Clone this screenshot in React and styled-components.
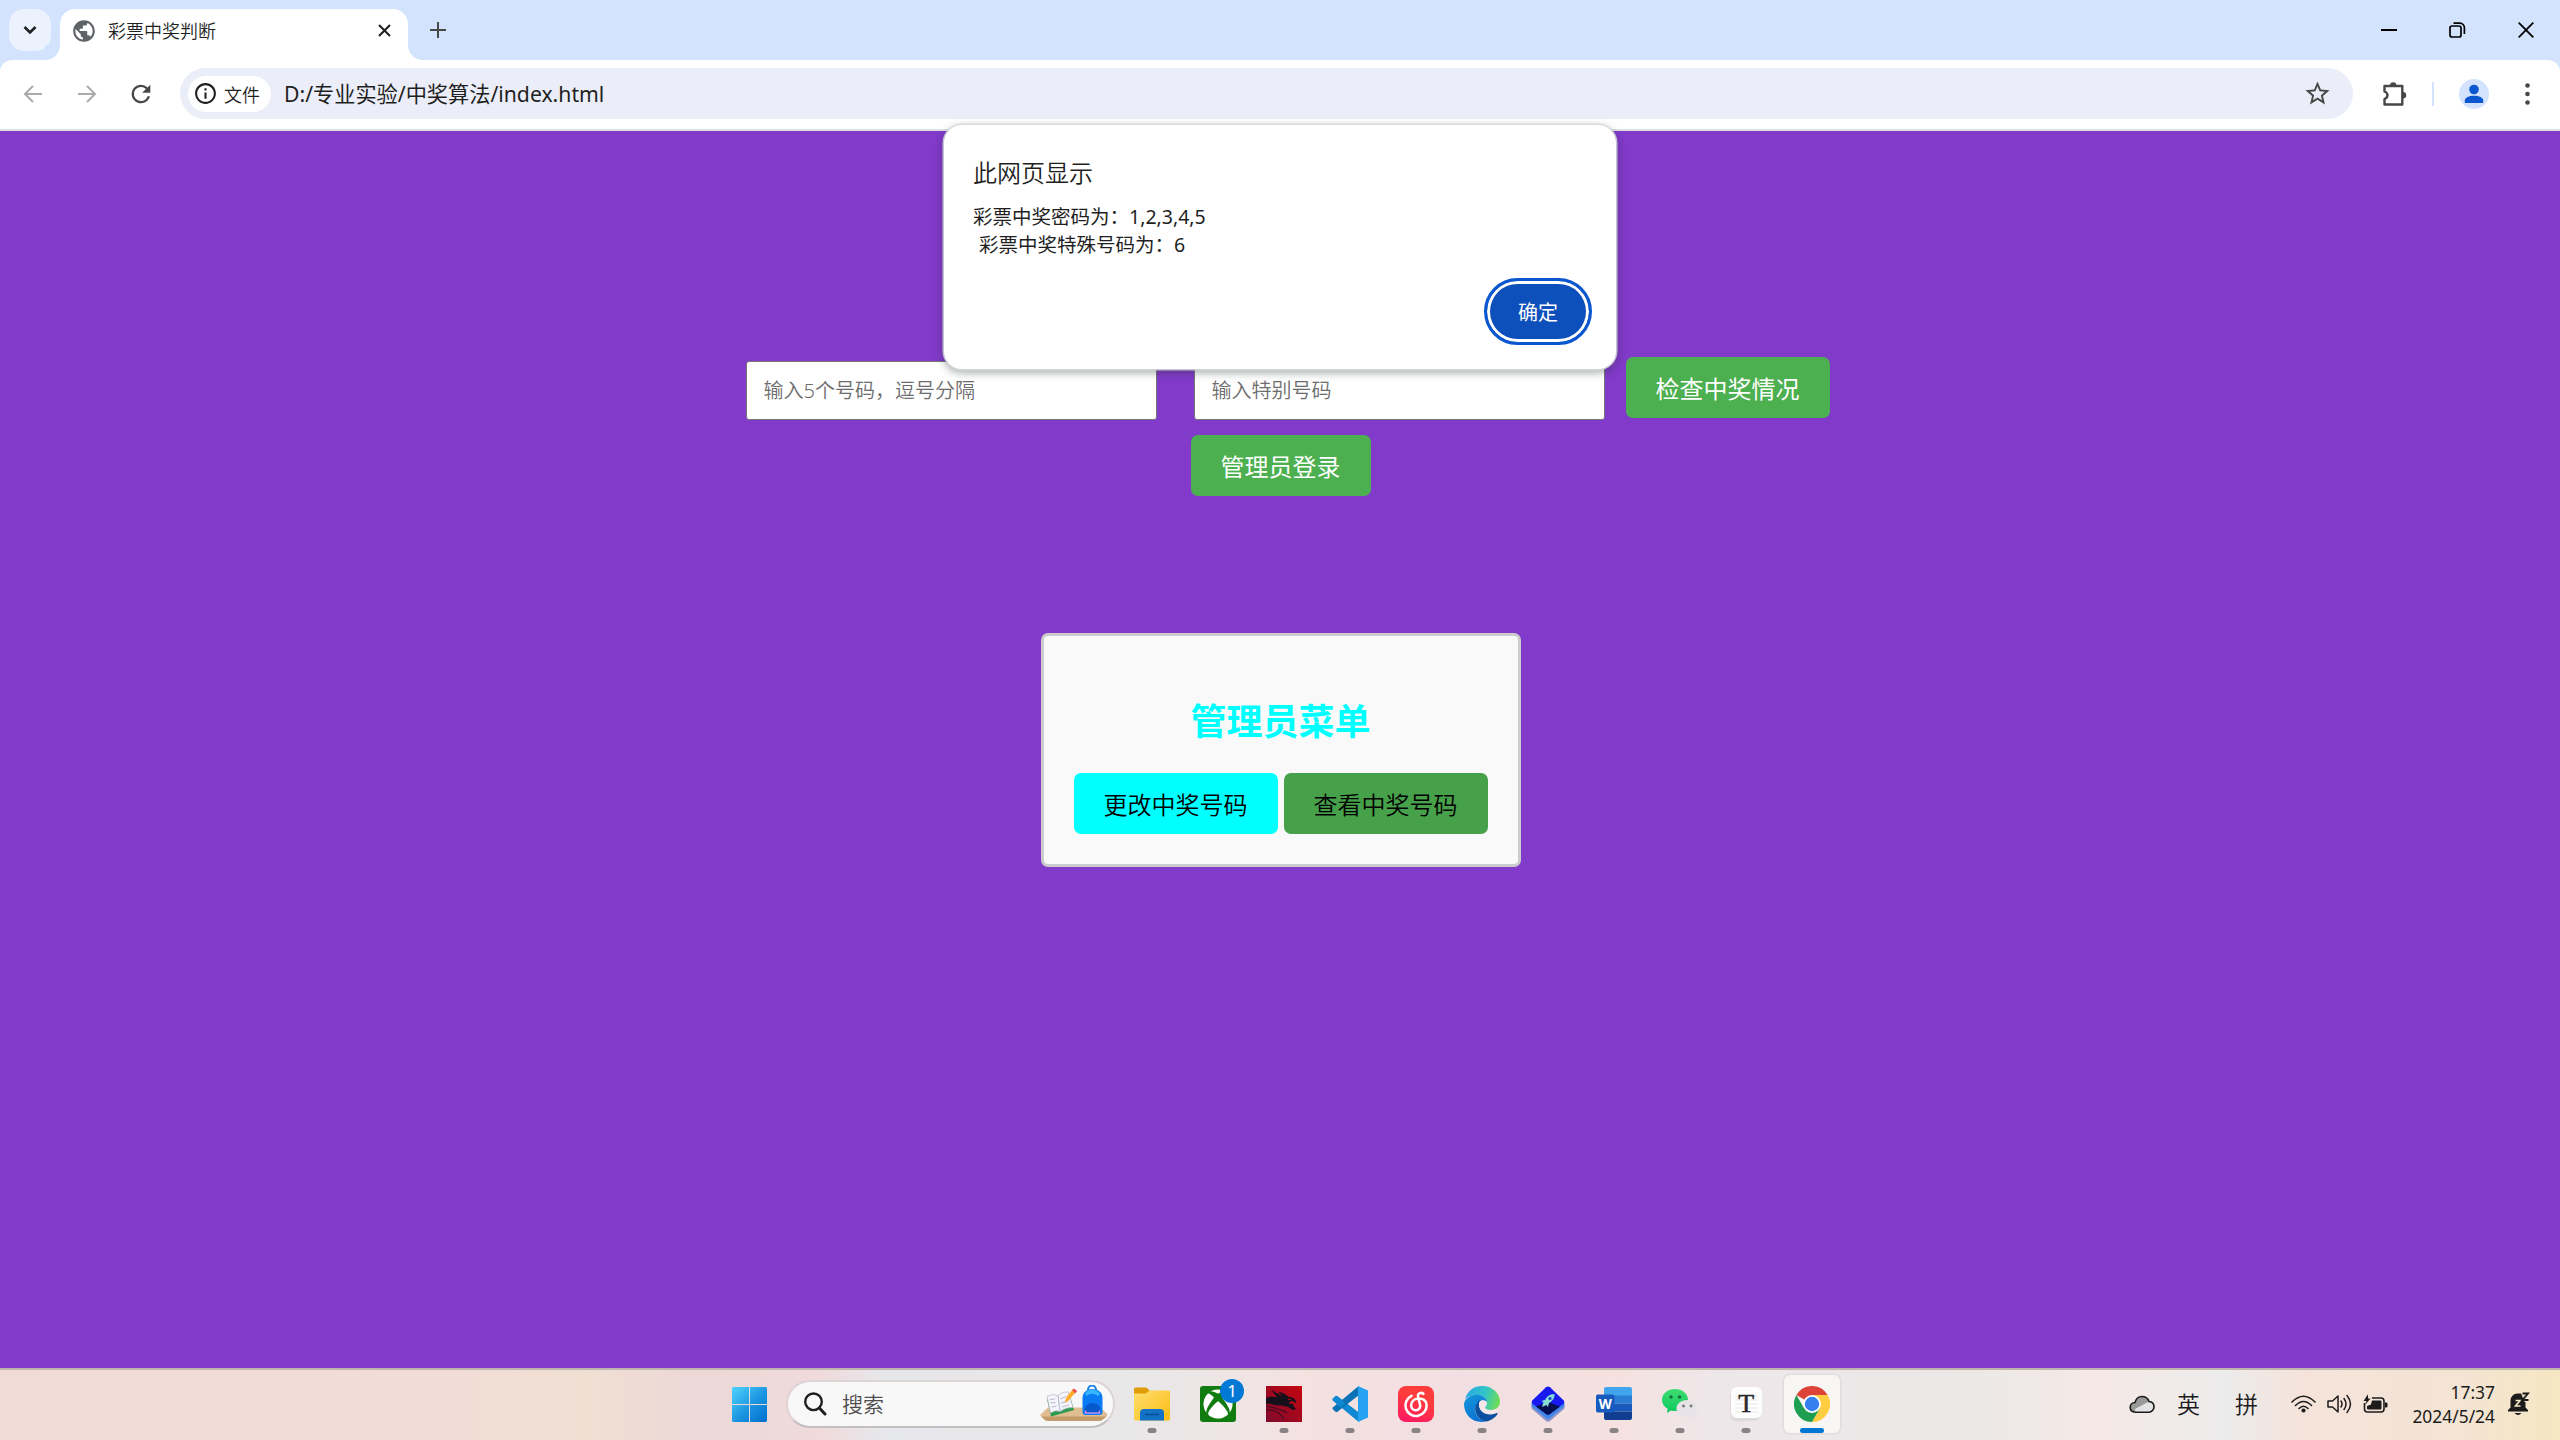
import React from "react";
import styled, { createGlobalStyle } from "styled-components";
import { MdPublic, MdInfoOutline, MdStarBorder, MdRefresh } from "react-icons/md";
import { FaXbox } from "react-icons/fa";

const Global = createGlobalStyle`
  * { box-sizing: border-box; }
  html, body { margin: 0; padding: 0; }
  body {
    width: 2560px;
    height: 1440px;
    overflow: hidden;
    font-family: "Noto Sans", "Noto Sans CJK SC", sans-serif;
    color: #1f1f1f;
  }
  svg { display: block; flex: none; }
`;

const Screen = styled.div`
  position: relative;
  display: flex;
  flex-direction: column;
  width: 2560px;
  height: 1440px;
  background: #d3e3fd;
`;

/* ---------- tab strip ---------- */
const TabStrip = styled.header`
  display: flex;
  height: 60px;
  padding: 9px 26px 0 9px;
  background: #d3e3fd;
`;

const TabSearch = styled.button`
  display: flex;
  align-items: center;
  justify-content: center;
  width: 42px;
  height: 42px;
  margin-right: 9px;
  padding: 0;
  border: 0;
  border-radius: 15px;
  background: #ebf2fe;
`;

const Tab = styled.div`
  position: relative;
  display: flex;
  align-items: center;
  width: 348px;
  height: 51px;
  padding: 0 17px 8px 11px;
  border-radius: 15px 15px 0 0;
  background: #fff;
  &::before, &::after {
    content: "";
    position: absolute;
    bottom: 0;
    width: 15px;
    height: 15px;
  }
  &::before { left: -15px; background: radial-gradient(circle at 0 0, #d3e3fd 14.5px, #fff 15.5px); }
  &::after { right: -15px; background: radial-gradient(circle at 100% 0, #d3e3fd 14.5px, #fff 15.5px); }
`;

const TabTitle = styled.span`
  flex: 1;
  margin-left: 11px;
  font-size: 18px;
  font-weight: 350;
  line-height: 24px;
`;

const NewTab = styled.div`
  display: flex;
  align-items: center;
  height: 42px;
  margin-left: 22px;
`;

const WindowControls = styled.div`
  display: flex;
  align-items: center;
  gap: 52px;
  height: 42px;
  margin-left: auto;
`;

/* ---------- toolbar ---------- */
const Toolbar = styled.div`
  display: flex;
  align-items: center;
  height: 71px;
  padding: 0 18px 2px 20px;
  border-bottom: 2px solid #dce1e3;
  border-radius: 12px 12px 0 0;
  background: #fff;
`;

const NavIcons = styled.div`
  display: flex;
  align-items: center;
  gap: 27.5px;
  width: 160px;
`;

const Omnibox = styled.div`
  display: flex;
  align-items: center;
  width: 2173px;
  height: 51px;
  padding: 0 21px 0 8px;
  border-radius: 26px;
  background: #ebeef8;
`;

const FileChip = styled.div`
  display: flex;
  align-items: center;
  gap: 6px;
  width: 83px;
  height: 36px;
  padding-left: 5px;
  border-radius: 18px;
  background: #fff;
  font-size: 18px;
  font-weight: 350;
  white-space: nowrap;
`;

const Url = styled.span`
  flex: 1;
  margin-left: 13px;
  font-size: 21.2px;
  line-height: 30px;
`;

const ToolbarEnd = styled.div`
  display: flex;
  align-items: center;
  margin-left: 28px;
`;

const ToolbarDivider = styled.i`
  width: 2px;
  height: 24px;
  margin: 0 25px 0 25px;
  background: #d3e3fd;
`;

const Avatar = styled.div`
  display: flex;
  align-items: center;
  justify-content: center;
  width: 30px;
  height: 30px;
  margin-right: 36px;
  border-radius: 50%;
  background: #d3e3fd;
`;

/* ---------- page ---------- */
const Page = styled.main`
  display: flex;
  flex-direction: column;
  align-items: center;
  height: 1237px;
  padding-top: 226px;
  background: #813ac9;
`;

const FormRow = styled.div`
  display: flex;
  align-items: flex-start;
  margin-left: 15px;
`;

const NumberInput = styled.input`
  width: 411px;
  height: 59px;
  margin: 4px ${(p) => p.$gap}px 0 0;
  padding: 0 17px;
  border: 1px solid #767676;
  border-radius: 3px;
  background: #fff;
  font-family: inherit;
  font-size: 20px;
  font-weight: 350;
  &::placeholder { color: #6d6d6d; opacity: 1; }
`;

const Button = styled.button`
  height: 61px;
  padding: 2px 30px 0;
  border: 0;
  border-radius: 7px;
  background: ${(p) => p.$bg || "#4caf50"};
  color: ${(p) => p.$fg || "#fff"};
  font-family: inherit;
  font-size: 24px;
  font-weight: ${(p) => (p.$fg ? 350 : 400)};
  line-height: 36px;
  white-space: nowrap;
`;

const LoginRow = styled.div`
  display: flex;
  margin: 15px 0 137px 1px;
`;

const AdminMenu = styled.section`
  display: flex;
  flex-direction: column;
  align-items: center;
  width: 480px;
  height: 234px;
  margin-left: 1px;
  padding-top: 64px;
  border: 3px solid #ccc;
  border-radius: 7px;
  background: #f9f9f9;
`;

const MenuTitle = styled.h2`
  margin: 0 0 29px;
  color: #0ff;
  font-size: 36px;
  font-weight: 700;
  line-height: 44px;
`;

const MenuButtons = styled.div`
  display: flex;
  gap: 6px;
`;

/* ---------- alert dialog ---------- */
const Dialog = styled.div`
  position: absolute;
  left: 944px;
  top: 125px;
  display: flex;
  flex-direction: column;
  width: 672px;
  height: 244px;
  padding: 30px 24px 24px 29px;
  border-radius: 18px;
  background: #fff;
  box-shadow: 0 0 0 1.5px rgba(214, 218, 222, 0.85), 0 3px 9px 1px rgba(40, 50, 50, 0.4);
`;

const DialogTitle = styled.div`
  margin-bottom: 12px;
  font-size: 24px;
  font-weight: 350;
  line-height: 36px;
`;

const DialogText = styled.div`
  padding-left: ${(p) => p.$indent || 0}px;
  font-size: 19.5px;
  line-height: 28px;
  white-space: pre;
`;

const OkButton = styled.button`
  align-self: flex-end;
  width: 108px;
  height: 67px;
  margin-top: auto;
  padding: 0 0 1px;
  border: 3px solid #0b57d0;
  border-radius: 34px;
  background: #0d50bb;
  box-shadow: inset 0 0 0 3px #fff;
  color: #fff;
  font-family: inherit;
  font-size: 20px;
`;

/* ---------- taskbar ---------- */
const Taskbar = styled.footer`
  position: relative;
  display: flex;
  align-items: center;
  height: 72px;
  padding: 0 0 2px 732px;
  border-top: 2px solid #bfb4ad;
  background: linear-gradient(90deg, #f1dcd5 0%, #f1ddd5 18%, #f0dfd3 23%, #ecd8d7 27%, #f0dadb 32%, #e6e7eb 34.5%, #e9e7e8 45%, #f4e2e1 51%, #f1dfe3 57%, #f5e1df 63%, #eee7ea 67%, #ebe8e6 77%, #f5e9e7 82%, #ecebeb 87%, #f5e3da 90%, #f3e4d4 96%, #f5e7c2 100%);
`;

const SearchPill = styled.div`
  display: flex;
  align-items: center;
  width: 329px;
  height: 48px;
  margin: 0 0 1px 19px;
  padding: 0 5px 0 15px;
  border: 2px solid #dcd4d5;
  border-bottom-color: #c3bfc1;
  border-left-color: #e0d4d5;
  border-radius: 24px;
  background: #f9f8f9;
`;

const SearchText = styled.span`
  flex: 1;
  margin-left: 15px;
  padding-bottom: 2px;
  color: #4d4d4d;
  font-size: 21px;
  font-weight: 350;
`;

const Apps = styled.div`
  display: flex;
  align-items: stretch;
  gap: 10px;
  margin-left: 9px;
`;

const AppSlot = styled.div`
  position: relative;
  display: flex;
  align-items: center;
  justify-content: center;
  width: 56px;
  height: 58px;
  padding-bottom: 1px;
  border-radius: 6px;
  background: ${(p) => (p.$active ? "#f8f5f5" : "transparent")};
  box-shadow: ${(p) => (p.$active ? "0 0 0 1.5px #e2dcdc" : "none")};
  &::after {
    content: "";
    position: absolute;
    left: 50%;
    bottom: 0;
    width: ${(p) => (p.$active ? 24 : 9)}px;
    height: 5px;
    transform: translateX(-50%);
    border-radius: 2.5px;
    background: ${(p) => (p.$active ? "#0078d4" : p.$running ? "#8a8385" : "transparent")};
  }
`;

const Badge = styled.span`
  position: absolute;
  left: 30px;
  top: 4px;
  width: 24px;
  height: 24px;
  border-radius: 50%;
  background: #0078d4;
  color: #fff;
  font-size: 17px;
  line-height: 24px;
  text-align: center;
`;

const XboxTile = styled.div`
  display: flex;
  align-items: center;
  justify-content: center;
  width: 36px;
  height: 36px;
  border-radius: 3px;
  background: #107c10;
  color: #fff;
`;

const MusicTile = styled(XboxTile)`
  border-radius: 8px;
  background: linear-gradient(200deg, #ff3c3c 40%, #ff1467);
`;

const Tray = styled.div`
  display: flex;
  align-items: center;
  margin-left: auto;
  padding-right: 30px;
  color: #1b1b1b;
`;

const Ime = styled.span`
  width: 24px;
  margin-left: ${(p) => p.$gap}px;
  padding-bottom: 1px;
  font-size: 23px;
  font-weight: 350;
  line-height: 30px;
`;

const TrayIcons = styled.div`
  display: flex;
  align-items: center;
  gap: 11px;
  margin-left: 32px;
`;

const Clock = styled.div`
  width: 107px;
  margin-right: 13px;
  padding-bottom: 1px;
  font-size: 17.400px;
  line-height: 24px;
  text-align: right;
`;

/* ---------- drawings ---------- */
const Stroke = ({ w, h = w, d, color = "#1f1f1f", width = 2 }) => (
  <svg width={w} height={h} viewBox={`0 0 ${w} ${h}`} fill="none" stroke={color} strokeWidth={width}>
    <path d={d} />
  </svg>
);

const Restore = () => (
  <svg width="17" height="16" viewBox="0 0 17 16" fill="none" stroke="#000" strokeWidth="1.7">
    <rect x="1" y="4" width="11" height="11" rx="2" />
    <path d="M4.5 1.2H11a4.4 4.4 0 0 1 4.4 4.4V12" />
  </svg>
);

const Puzzle = () => (
  <svg width="26" height="26" viewBox="0 0 26 26">
    <path d="M3.500 5h17.800v18.500H3.500v-5.500c4-1.500 4-6 0-7.500z" fill="none" stroke="#474747" strokeWidth="2.400" strokeLinejoin="round" />
    <path d="M9 4.500a3.200 3.200 0 0 1 6.400 0zM22 11a3.200 3.200 0 0 1 0 6.400z" fill="#474747" />
  </svg>
);

const Kebab = () => (
  <svg width="5" height="24" viewBox="0 0 5 24" fill="#474747">
    <circle cx="2.500" cy="3.500" r="2.300" /><circle cx="2.500" cy="12" r="2.300" /><circle cx="2.500" cy="20.500" r="2.300" />
  </svg>
);

const Person = () => (
  <svg width="20" height="20" viewBox="0 0 20 20" fill="#0b57d0">
    <circle cx="10" cy="5.500" r="4.800" />
    <path d="M.8 19v-2.500C.8 13.500 5 11.800 10 11.800s9.200 1.700 9.200 4.700V19z" />
  </svg>
);

const Windows = () => (
  <svg width="35" height="35" viewBox="0 0 35 35">
    <defs>
      <linearGradient id="win" gradientUnits="userSpaceOnUse" x1="0" y1="0" x2="35" y2="35">
        <stop offset="0" stopColor="#4fd4ff" /><stop offset=".55" stopColor="#1b94e0" /><stop offset="1" stopColor="#0070cf" />
      </linearGradient>
    </defs>
    <path fill="url(#win)" d="M1 0h16v17H0V1zM18 0h16l1 1v16H18zM0 18h17v17H1l-1-1zM18 18h17v16l-1 1H18z" />
  </svg>
);

const Magnifier = () => (
  <svg width="24" height="24" viewBox="0 0 24 24" fill="none" stroke="#1f1f1f">
    <circle cx="10.500" cy="9.800" r="8.300" strokeWidth="2.400" />
    <path d="M16.300 16l5.700 6" strokeWidth="3" strokeLinecap="round" />
  </svg>
);

const SchoolArt = () => (
  <svg width="68" height="37" viewBox="0 0 68 37">
    <path d="M0 30l8-7.500h52l8 7-6 5.500q-1 1-4 1H9q-3 0-4-1z" fill="#e0bd90" />
    <path d="M1 31.500h66l-5 3.500q-1 1-4 1H9q-3 0-4-1z" fill="#c49c6c" />
    <path d="M7 14l22-5.500 5 16.500-23 6.500z" fill="#2c9a4e" />
    <path d="M7 11.500Q13 8 18 10.500l2 16q-4-2-9.500 1.500zM18 10.500Q22 6.500 28.500 7L33 22.500q-7-.5-13 4z" fill="#f4f4fb" stroke="#b6b5c8" strokeWidth=".7" />
    <path d="M10 14.500l5-.5M10.500 18l5-.5M11.500 22l5-.8M20 14l6-2.500M21 18l7.500-2M22 22l7-2" stroke="#bbb9cf" />
    <path d="M24.500 18l2-6 6-7.500 3 3L29 15z" fill="#ffae2b" />
    <path d="M32 5l2-1.500 3.200 2.500-2 2.500z" fill="#ef5350" />
    <path d="M48 5c0-6 8-6 8 0" fill="none" stroke="#1784e8" strokeWidth="2" />
    <path d="M42.500 13c0-12 20-12 20 0v14q0 3-3 3h-14q-3 0-3-3z" fill="#0a7bf2" />
    <path d="M45 9c2-6 12-6 15 0l-2 2c-4-3-8-3-11 0z" fill="#35b6ff" />
    <path d="M44.500 25c0-9 16-9 16 0v3h-16z" fill="#0458c9" />
    <path d="M45.500 25.500v2.500h14v-2.500" fill="none" stroke="#c08cff" strokeWidth="1.500" />
  </svg>
);

const Explorer = () => (
  <svg width="36" height="34" viewBox="0 0 36 34">
    <defs><linearGradient id="fol" x1="0" y1="0" x2="1" y2="1"><stop offset="0" stopColor="#ffdf6e" /><stop offset="1" stopColor="#fbbb14" /></linearGradient></defs>
    <path d="M0 2q0-1.500 1.500-1.500H11q1.500 0 2.500 1L16 4v5H0z" fill="#df9c08" />
    <path d="M0 6.500h12l3.500-3H34.500q1.500 0 1.500 1.500v27q0 1.500-1.500 1.500h-33Q0 33.500 0 32z" fill="url(#fol)" />
    <path d="M6 33.500V26q0-4 4-4h16q4 0 4 4v7.500z" fill="#1273c6" />
    <path d="M11 27.500h14" stroke="#0a4a94" strokeWidth="1.500" />
  </svg>
);

const Dragon = () => (
  <svg width="36" height="36" viewBox="0 0 36 36">
    <defs><linearGradient id="drg" x1="1" y1="0" x2="0" y2="1"><stop offset="0" stopColor="#c40510" /><stop offset="1" stopColor="#800a2c" /></linearGradient></defs>
    <path fill="url(#drg)" d="M0 0h36v36H0z" />
    <path fill="#16101c" d="M0 12c4-2 8-1 11-1L5 4c5 2 8 5 11 5.500L12 6c5 0 8 3 11 5 2 0 5 1 7 3.500l-.5 2.500-2.500-2-3 .5-1.500 2 5 .5-.5 1.500 3 3.500-3 1-5-3-4-1c-4-1-6 0-9-1-3-1-6-1.500-9-1z" />
    <path d="M0 20c8 2 16 3 21 7M0 24c8-1 15 3 18 9" fill="none" stroke="#4a0a24" strokeWidth="1.200" />
    <path d="M22 13l3 .8" stroke="#c40510" />
  </svg>
);

const VsCode = () => (
  <svg width="36" height="36" viewBox="0 0 36 36">
    <path d="M1 12.500l2.500-2.300q1-.7 2 0L27.500 27v8.500L25.500 35 .8 14.500q-.8-1 .2-2z" fill="#0f8ad2" />
    <path d="M1 23.500l2.500 2.300q1 .7 2 0L27 9V.4L25.500 1 .8 21.500q-.8 1 .2 2z" fill="#0b72b8" />
    <path d="M4 9.800l9 6.700L9 22 1 14.500q-1-1 0-2z" fill="#0f8ad2" />
    <path d="M26 0L36 4.500v27L26 36z" fill="#27a2f3" />
  </svg>
);

const MusicSwirl = () => (
  <svg width="28" height="28" viewBox="0 0 28 28" fill="none" stroke="#fff" strokeWidth="2.500" strokeLinecap="round">
    <path d="M9.500 5.800A10.600 10.600 0 1 0 24.600 14.500C24.300 10.500 20.500 8.200 16.500 8.500 12 8.800 9.200 11.800 9.200 15.300c0 3 2 5 4.600 5s4.600-2 4.400-4.600c-.1-1.700-2-7.200-2.200-9.700-.2-3 3.400-4 5.400-2.200" />
  </svg>
);

const Edge = () => (
  <svg width="36" height="36" viewBox="0 0 36 36">
    <defs>
      <linearGradient id="e1" x1="0" y1=".3" x2="1" y2=".5"><stop offset="0" stopColor="#2ba7e4" /><stop offset=".55" stopColor="#2fc6c8" /><stop offset="1" stopColor="#6fdc55" /></linearGradient>
      <linearGradient id="e2" x1="0" y1="0" x2=".4" y2="1"><stop offset="0" stopColor="#1496dc" /><stop offset="1" stopColor="#0b74d1" /></linearGradient>
    </defs>
    <path d="M1 13C4 4 10 0 18 0c11 0 18 8 18 15.500 0 5-4 8.500-9 8.500-4 0-6-1.500-6-2.500s2-2 2-5c0-4-4-7.500-9-7.500C8 9 3 11 1 13z" fill="url(#e1)" />
    <path d="M0 18C1 12 7 8.500 13.500 8.800 19 9 23 12.500 23 16.500c-2-3-8-2.500-10.500 2C9 25 13 34 22 35.500 10 38 0 30 0 18z" fill="url(#e2)" />
    <path d="M12.500 18c-4 7 2 17 10 17.400 5-1 9-4 11-7.400.4-.8-.3-1.300-1-1-9 4-18-.5-17.500-9.500.2-1.500 1-3 2-3.800-2 .5-3.500 2-4.500 4.300z" fill="#0c519f" />
    <path d="M15 17.500c1-4 5-4.500 8-1 0 3-2 4-2 5.200 0 1.500 3 2.800 7 2.300 2 0 3-.5 4-1-.5 2-1 3.500-.5 4-8 3-17-.5-16.500-9.500z" fill="#f4e8ea" />
  </svg>
);

const Rocket = () => (
  <svg width="34" height="36" viewBox="0 0 34 36">
    <path d="M.5 19L17 31l16.500-12v3.500L19 35q-2 1.500-4 0L.5 22.500z" fill="#8c93cc" />
    <path d="M.5 17h33v3L19 32q-2 1.500-4 0L.5 20z" fill="#3e86e8" />
    <path d="M15 1.200q2-1.500 4 0l13.500 13q1.500 1.800 0 3.600L19 28q-2 1.500-4 0L1.500 17.800q-1.500-1.800 0-3.600z" fill="#1818f0" />
    <path d="M5 20.500L17 16l12 4.500L19 28q-2 1.500-4 0z" fill="#07104f" />
    <path d="M23.500 8c-5 0-8 3-9.500 6l-4 1 2.500 1-1.500 5 4.500-2 1.500 2 1-4c3-1.500 6-5 5.500-9z" fill="#86dfd2" />
    <circle cx="19" cy="12.500" r="1.600" fill="#1c45c8" />
  </svg>
);

const Word = () => (
  <svg width="36" height="34" viewBox="0 0 36 34">
    <path d="M8 2q0-2 2-2h24q2 0 2 2v7H8z" fill="#41a5ee" /><path d="M8 8.500h28v8H8z" fill="#2b7cd3" />
    <path d="M8 16.500h28v8H8z" fill="#185abd" /><path d="M8 24.500h28V31q0 2-2 2H10q-2 0-2-2z" fill="#103f91" />
    <rect y="7.500" width="18.500" height="18" rx="1.800" fill="#185abd" />
    <text x="9.200" y="21.500" textAnchor="middle" fontFamily="Noto Sans" fontWeight="700" fontSize="13.500" fill="#fff">W</text>
  </svg>
);

const WeChat = () => (
  <svg width="36" height="30" viewBox="0 0 36 30">
    <defs><linearGradient id="wc" x1="0" y1="0" x2="0" y2="1"><stop offset="0" stopColor="#3fdc70" /><stop offset="1" stopColor="#0cc961" /></linearGradient></defs>
    <path d="M13 0c7.500 0 13 4.700 13 11s-5.500 11-13 11q-2 0-4-.5L5 24l.6-4.200C2 17.600 0 14.500 0 11 0 4.700 5.500 0 13 0z" fill="url(#wc)" />
    <circle cx="9" cy="8" r="1.800" fill="#17713b" /><circle cx="17.500" cy="8" r="1.800" fill="#17713b" />
    <path d="M25 11c6 0 10.500 3.800 10.500 9 0 3-1.500 5-4 6.600l.5 2.900-3.200-1.800q-1.800.5-3.800.5c-6 0-10.500-3.500-10.500-8.500S19 11 25 11z" fill="#e6e4e6" />
    <circle cx="21.500" cy="17" r="1.400" fill="#777" /><circle cx="29" cy="17" r="1.400" fill="#777" />
  </svg>
);

const Typora = () => (
  <svg width="34" height="36" viewBox="0 0 34 36">
    <rect x="1" y="4" width="30" height="31" rx="6" fill="#dcdada" transform="rotate(-3 16 19)" />
    <rect x="2" y="1" width="31" height="31" rx="6" fill="#fdfdfd" />
    <path d="M6 10h23M6 14h23M6 18h23M6 22h23M6 26h23" stroke="#e7e7e7" />
    <text x="17.300" y="25.500" textAnchor="middle" fontFamily="Liberation Serif" fontSize="26" fill="#2a2a2a" stroke="#2a2a2a" strokeWidth=".5">T</text>
  </svg>
);

const Chrome = () => (
  <svg width="36" height="36" viewBox="0 0 36 36">
    <path d="M18 18L2.400 9A18 18 0 0 1 33.600 9z" fill="#db4437" />
    <path d="M18 9h15.600A18 18 0 0 1 18 36l7.800-13.500z" fill="#ffcd40" />
    <path d="M10.200 22.500L2.400 9A18 18 0 0 0 18 36l7.800-13.500z" fill="#1e9e50" />
    <circle cx="18" cy="18" r="9" fill="#fff" /><circle cx="18" cy="18" r="7.200" fill="#3480f0" />
  </svg>
);

const Cloud = () => (
  <svg width="26" height="19" viewBox="0 0 26 19">
    <path d="M6.500 17.200C3 17.200 1.200 15 1.200 12.300 1.200 9.500 3.500 7.500 6 7.500 7 3.500 10 1.500 13 1.500s6 2 7 5c3 .3 5 2.500 5 5.300s-2.300 5.400-5.200 5.400z" fill="#e3e3e3" />
    <path d="M6.500 17C3 16 1.200 15 1.200 12.300 1.200 9.500 3.500 7.500 6 7.500 7 3.500 10 1.500 13 1.500s6 2 7 5L6 14z" fill="#999" />
    <path d="M6.500 17.200C3 17.200 1.200 15 1.200 12.300 1.200 9.500 3.500 7.500 6 7.500 7 3.500 10 1.500 13 1.500s6 2 7 5c3 .3 5 2.500 5 5.300s-2.300 5.400-5.200 5.400z" fill="none" stroke="#1b1b1b" strokeWidth="1.600" />
  </svg>
);

const Wifi = () => (
  <svg width="25" height="18" viewBox="0 0 25 18" fill="none" stroke="#1b1b1b" strokeWidth="1.600" strokeLinecap="round">
    <path d="M1 7Q12.500-4.500 24 7M4.500 10.500q8-8 16 0M8 13.500q4.500-4.500 9 0" /><circle cx="12.500" cy="15.500" r="1.300" fill="#1b1b1b" />
  </svg>
);

const Volume = () => (
  <svg width="25" height="20" viewBox="0 0 25 20" fill="none" stroke="#1b1b1b" strokeWidth="1.500" strokeLinecap="round" strokeLinejoin="round">
    <path d="M1 7h4.500L11 2v16l-5.500-5H1zM14 7q2 3 0 6M17 4.500q4 5.500 0 11M20 1.500q7 8.500 0 17" />
  </svg>
);

const Battery = () => (
  <svg width="25" height="20" viewBox="0 0 25 20">
    <path d="M9 4h9q3 0 3 3v8q0 3-3 3H4.500q-3 0-3-3V9" fill="none" stroke="#1b1b1b" strokeWidth="1.600" />
    <path d="M9 6.500h8.500q1 0 1 1v7q0 1-1 1H5q-1 0-1-1V12l4-1.500zM22 8.500h1q1.500 0 1.500 1v3q0 1-1.500 1h-1z" fill="#1b1b1b" />
    <path d="M5 .2L.5 7h3L2 11l5.500-6.500H5z" fill="#1b1b1b" />
  </svg>
);

const BellSnooze = () => (
  <svg width="22" height="24" viewBox="0 0 22 24">
    <path d="M2.500 15.500V9a7 7 0 0 1 7-7.500h8V15.500l2.500 2.500v1.500H0V18zM6.500 21h7q-3.500 4-7 0z" fill="#1b1b1b" />
    <path d="M12.500 0H22v10h-5.500z" fill="#f5e6c9" />
    <path d="M7.500 8.500H12L7.500 14h5" fill="none" stroke="#f5e6c9" strokeWidth="1.600" />
    <path d="M14.500 1.500H20l-5.500 6.500h6" fill="none" stroke="#1b1b1b" strokeWidth="1.900" />
  </svg>
);

export default function App() {
  return (
    <Screen>
      <Global />
      <TabStrip>
        <TabSearch><Stroke w={14} h={10} d="M1.500 2L7 7.500 12.500 2" width={2.600} /></TabSearch>
        <Tab>
          <MdPublic size={26} color="#5f6368" />
          <TabTitle>彩票中奖判断</TabTitle>
          <Stroke w={13} d="M1 1l11 11M12 1L1 12" />
        </Tab>
        <NewTab><Stroke w={16} d="M8 0v16M0 8h16" color="#474747" /></NewTab>
        <WindowControls>
          <Stroke w={16} h={2} d="M0 1h16" color="#000" />
          <Restore />
          <Stroke w={16} d="M.7.7l14.600 14.600M15.300.7L.7 15.300" color="#000" width={1.800} />
        </WindowControls>
      </TabStrip>

      <Toolbar>
        <NavIcons>
          <Stroke w={26} h={20} d="M22 10H5M13 2L5 10l8 8" color="#aaa" />
          <Stroke w={26} h={20} d="M4 10h17M13 2l8 8-8 8" color="#aaa" />
          <MdRefresh size={28} color="#474747" />
        </NavIcons>
        <Omnibox>
          <FileChip><MdInfoOutline size={25} />文件</FileChip>
          <Url>D:/专业实验/中奖算法/index.html</Url>
          <MdStarBorder size={29} color="#474747" />
        </Omnibox>
        <ToolbarEnd>
          <Puzzle />
          <ToolbarDivider />
          <Avatar><Person /></Avatar>
        </ToolbarEnd>
        <Kebab />
      </Toolbar>

      <Page>
        <FormRow>
          <NumberInput $gap={37} placeholder="输入5个号码，逗号分隔" />
          <NumberInput $gap={21} placeholder="输入特别号码" />
          <Button>检查中奖情况</Button>
        </FormRow>
        <LoginRow><Button>管理员登录</Button></LoginRow>
        <AdminMenu>
          <MenuTitle>管理员菜单</MenuTitle>
          <MenuButtons>
            <Button $bg="#0ff" $fg="#000">更改中奖号码</Button>
            <Button $bg="#47a04a" $fg="#000">查看中奖号码</Button>
          </MenuButtons>
        </AdminMenu>
      </Page>

      <Dialog>
        <DialogTitle>此网页显示</DialogTitle>
        <DialogText>彩票中奖密码为：1,2,3,4,5</DialogText>
        <DialogText $indent={6}>彩票中奖特殊号码为：6</DialogText>
        <OkButton>确定</OkButton>
      </Dialog>

      <Taskbar>
        <Windows />
        <SearchPill>
          <Magnifier />
          <SearchText>搜索</SearchText>
          <SchoolArt />
        </SearchPill>
        <Apps>
          <AppSlot $running><Explorer /></AppSlot>
          <AppSlot><XboxTile><FaXbox size={30} /></XboxTile><Badge>1</Badge></AppSlot>
          <AppSlot $running><Dragon /></AppSlot>
          <AppSlot $running><VsCode /></AppSlot>
          <AppSlot $running><MusicTile><MusicSwirl /></MusicTile></AppSlot>
          <AppSlot $running><Edge /></AppSlot>
          <AppSlot $running><Rocket /></AppSlot>
          <AppSlot $running><Word /></AppSlot>
          <AppSlot $running><WeChat /></AppSlot>
          <AppSlot $running><Typora /></AppSlot>
          <AppSlot $active><Chrome /></AppSlot>
        </Apps>
        <Tray>
          <Cloud />
          <Ime $gap={22}>英</Ime>
          <Ime $gap={34}>拼</Ime>
          <TrayIcons><Wifi /><Volume /><Battery /></TrayIcons>
          <Clock>17:37<br />2024/5/24</Clock>
          <BellSnooze />
        </Tray>
      </Taskbar>
    </Screen>
  );
}
